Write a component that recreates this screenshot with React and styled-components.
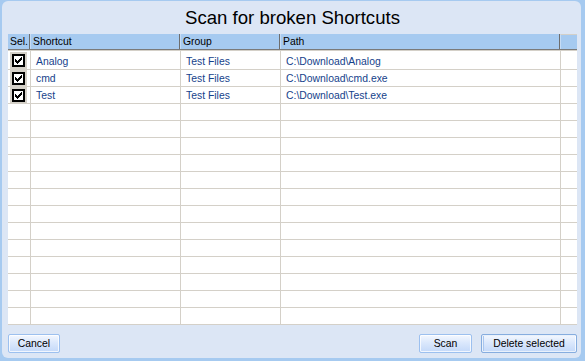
import React from 'react';
import styled, { createGlobalStyle } from 'styled-components';

const Global = createGlobalStyle`
  html, body { margin: 0; padding: 0; }
  body {
    background: #a6caf0;
    width: 585px;
    height: 361px;
    overflow: hidden;
    font-family: "Liberation Sans", Arial, sans-serif;
  }
  #root { padding-top: 1px; }
`;

const Window = styled.div`
  box-sizing: border-box;
  margin: 0 4px 0 2px;
  width: 579px;
  height: 357px;
  background: #dce6f5;
  border-radius: 6px;
  display: flex;
  flex-direction: column;
  padding: 0 4px 0 6px;
`;

const Title = styled.div`
  height: 33px;
  line-height: 34px;
  text-align: center;
  font-size: 18.6px;
  color: #000;
  flex: none;
`;

const Grid = styled.div`
  height: 291px;
  background: #fff;
  display: flex;
  flex-direction: column;
  overflow: hidden;
  flex: none;
`;

const HeaderRow = styled.div`
  box-sizing: border-box;
  display: grid;
  grid-template-columns: 22px 150px 100px 280px 1fr;
  height: 16px;
  background: #a6caf0;
  border-bottom: 1px solid #7a7a7a;
  flex: none;
`;

const HeaderCell = styled.div`
  box-sizing: border-box;
  height: 15px;
  line-height: 15px;
  font-size: 10.4px;
  color: #000;
  padding-left: 2px;
  border-left: ${p => (p.$first ? 'none' : '1px solid #c6dcf5')};
  border-right: ${p => (p.$last ? 'none' : '1px solid #6e6e6e')};
  border-top: ${p => (p.$last ? '1px solid #d4d0c8' : 'none')};
  white-space: nowrap;
  overflow: hidden;
`;

const Body = styled.div`
  border-top: 1px solid #d4d0c8;
  display: flex;
  flex-direction: column;
`;

const Row = styled.div`
  box-sizing: border-box;
  display: grid;
  grid-template-columns: 23px 150px 100px 280px 1fr;
  height: ${p => (p.$first ? 19 : 17)}px;
  border-bottom: 1px solid #d4d0c8;
  flex: none;
`;

const Cell = styled.div`
  box-sizing: border-box;
  height: 100%;
  padding-left: 5px;
  padding-top: ${p => (p.$first ? 3 : 1)}px;
  line-height: 16px;
  font-size: 10.4px;
  color: #15428b;
  border-right: ${p => (p.$last ? 'none' : '1px solid #d4d0c8')};
  white-space: nowrap;
  overflow: hidden;
`;

const SelCell = styled.div`
  box-sizing: border-box;
  height: 100%;
  border-right: 1px solid #d4d0c8;
  padding: ${p => (p.$first ? '1px 0 0 2px' : '0 0 0 2px')};
  display: flex;
`;

const CheckHolder = styled.span`
  width: 17px;
  height: 100%;
  background: #d4d0c8;
  display: flex;
  align-items: center;
  justify-content: center;
`;

const CheckBox = styled.span`
  box-sizing: border-box;
  width: 13px;
  height: 13px;
  border: 2px solid #000;
  background: #fff;
  display: flex;
  align-items: center;
  justify-content: center;
`;

const Footer = styled.div`
  display: flex;
  align-items: flex-start;
  padding-top: 9px;
  gap: 9px;
  flex: none;
`;

const Spacer = styled.div`
  flex: 1;
`;

const Button = styled.button`
  box-sizing: border-box;
  width: ${p => p.$w}px;
  height: 19px;
  padding: 0;
  margin: 0;
  border: 1px solid ${p => (p.$default ? '#86addf' : '#9cc0ef')};
  border-radius: 2px;
  background: linear-gradient(to bottom, #f4f8ff 0%, #dbe8fc 45%, #c4d9f9 100%);
  box-shadow: inset 0 0 0 1px rgba(255, 255, 255, 0.75)${p => (p.$default ? ', inset 1px 0 0 1px #a9c6ef' : '')};
  font-family: "Liberation Sans", Arial, sans-serif;
  font-size: 10.4px;
  line-height: 17px;
  color: #000;
  text-align: center;
`;

const CheckMark = () => (
  <svg width="7" height="7" viewBox="0 0 7 7" shapeRendering="crispEdges">
    <path
      fill="#000"
      d="M6 0h1v1h-1z M5 1h2v1h-2z M0 2h1v1h-1z M4 2h3v1h-3z M0 3h2v1h-2z M3 3h3v1h-3z M0 4h5v1h-5z M1 5h3v1h-3z M2 6h1v1h-1z"
    />
  </svg>
);

const data = [
  { name: 'Analog', group: 'Test Files', path: 'C:\\Download\\Analog' },
  { name: 'cmd', group: 'Test Files', path: 'C:\\Download\\cmd.exe' },
  { name: 'Test', group: 'Test Files', path: 'C:\\Download\\Test.exe' },
];

const TOTAL_ROWS = 16;

export default function App() {
  const rows = [];
  for (let i = 0; i < TOTAL_ROWS; i++) {
    const d = data[i];
    const first = i === 0;
    rows.push(
      <Row key={i} $first={first}>
        <SelCell $first={first}>
          {d && (
            <CheckHolder>
              <CheckBox>
                <CheckMark />
              </CheckBox>
            </CheckHolder>
          )}
        </SelCell>
        <Cell $first={first}>{d ? d.name : ''}</Cell>
        <Cell $first={first}>{d ? d.group : ''}</Cell>
        <Cell $first={first}>{d ? d.path : ''}</Cell>
        <Cell $first={first} $last />
      </Row>
    );
  }

  return (
    <>
      <Global />
      <Window>
        <Title>Scan for broken Shortcuts</Title>
        <Grid>
          <HeaderRow>
            <HeaderCell $first>Sel.</HeaderCell>
            <HeaderCell>Shortcut</HeaderCell>
            <HeaderCell>Group</HeaderCell>
            <HeaderCell>Path</HeaderCell>
            <HeaderCell $last />
          </HeaderRow>
          <Body>{rows}</Body>
        </Grid>
        <Footer>
          <Button $w={52}>Cancel</Button>
          <Spacer />
          <Button $w={53}>Scan</Button>
          <Button $w={96} $default>Delete selected</Button>
        </Footer>
      </Window>
    </>
  );
}
